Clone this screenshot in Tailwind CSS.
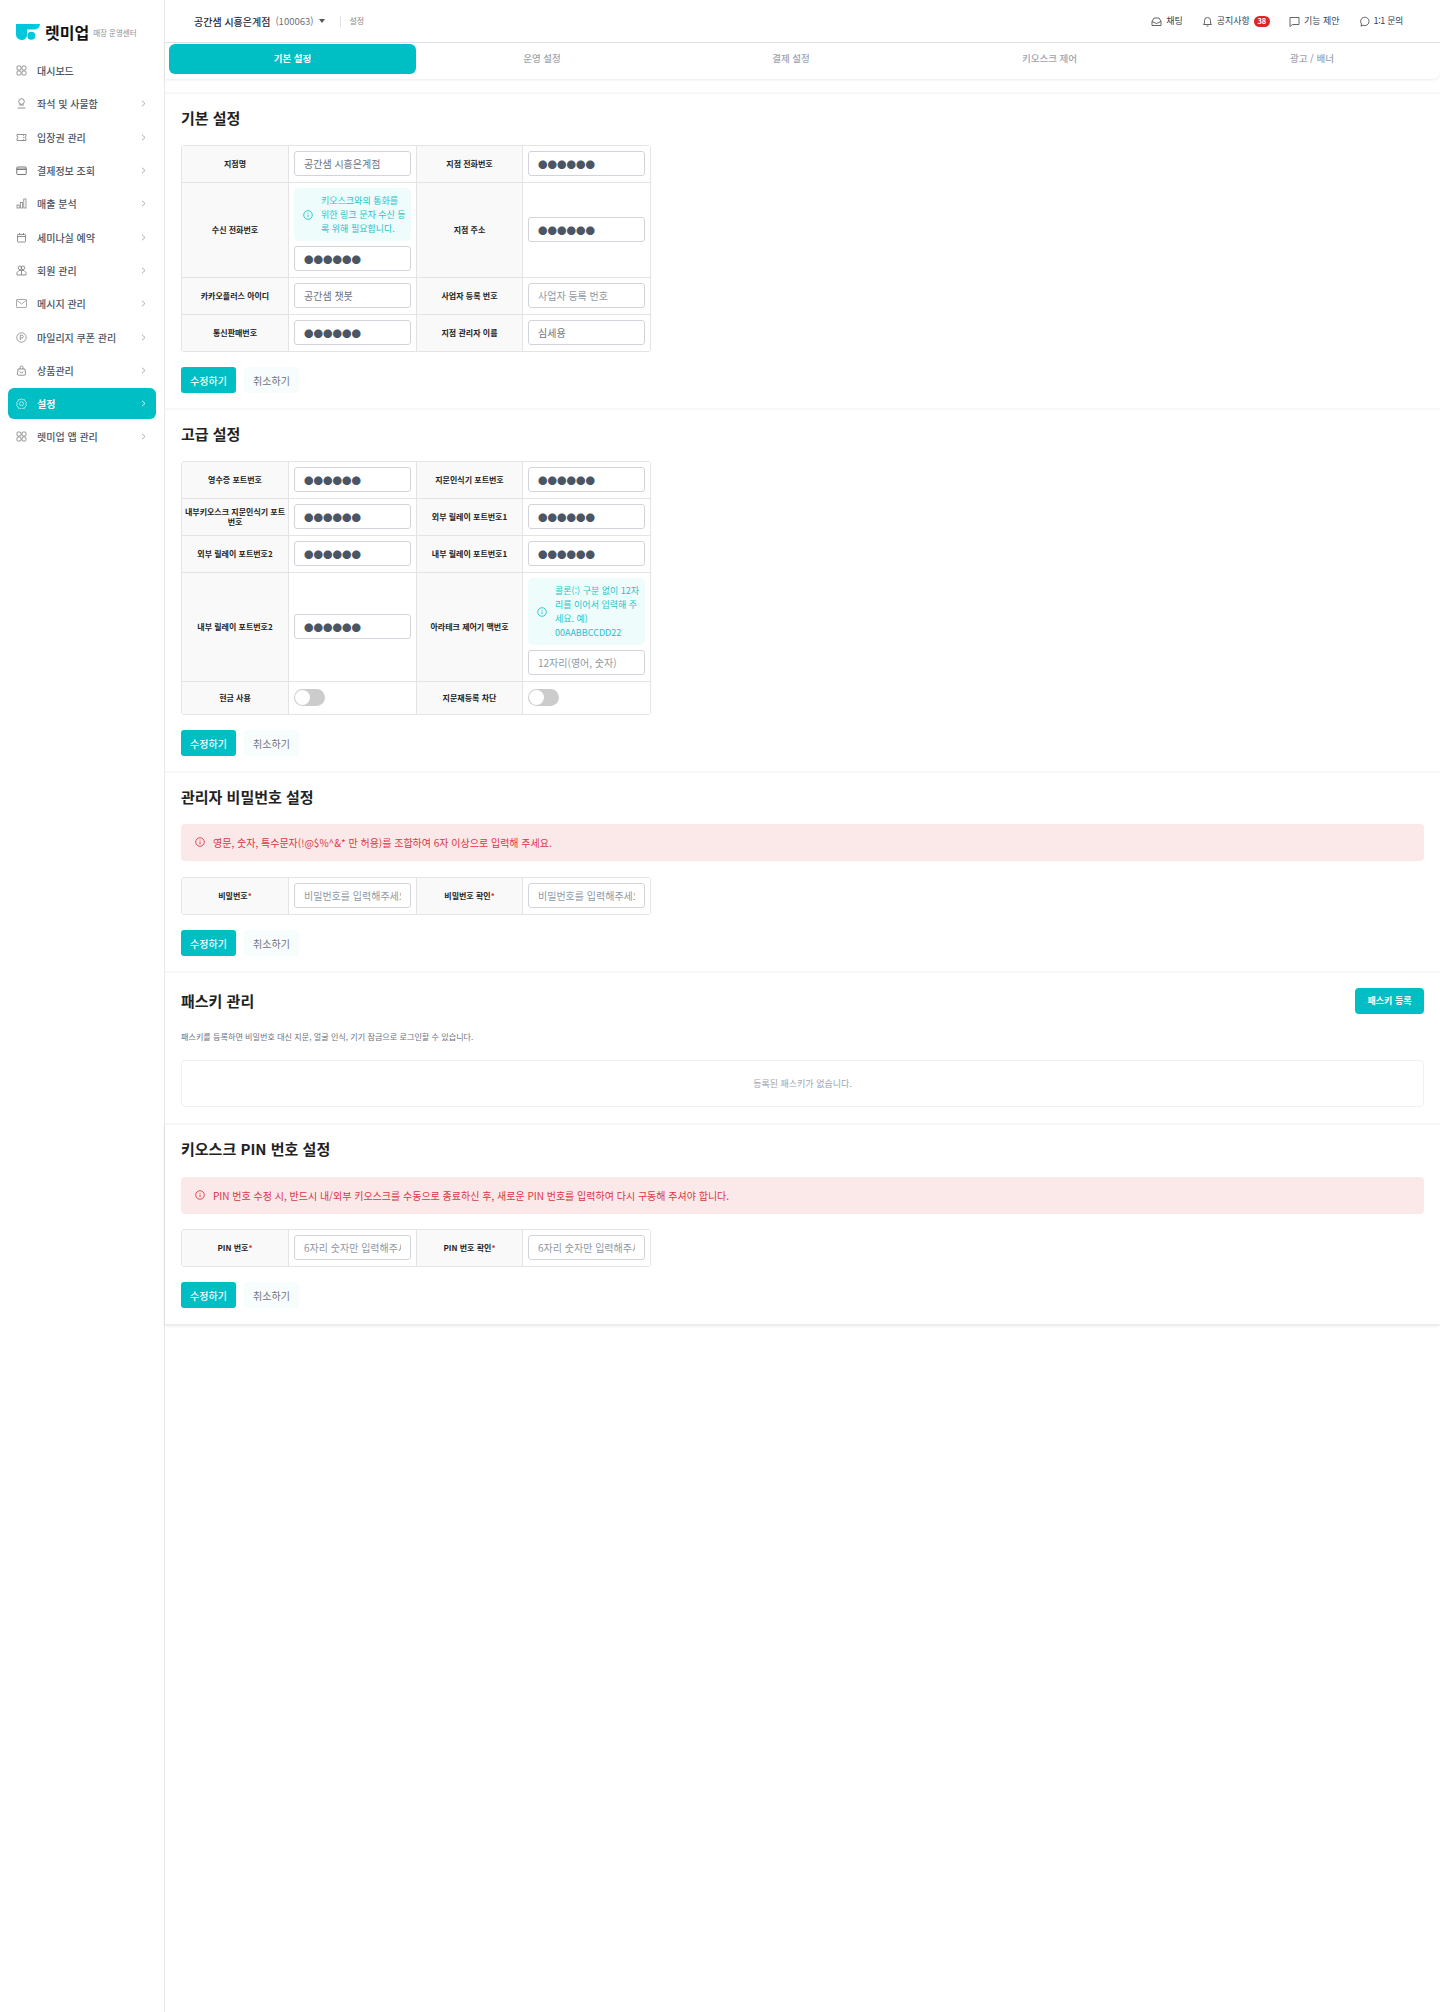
<!DOCTYPE html>
<html lang="ko">
<head>
  <meta charset="UTF-8" />
  <meta name="viewport" content="width=device-width, initial-scale=1.0" />
  <title>설정</title>
  <script src="https://cdn.jsdelivr.net/npm/@tailwindcss/browser@4"></script>
</head>
<body class="bg-white font-['Noto_Sans_CJK_KR','Noto_Sans',sans-serif] text-[#222]">
<div class="flex min-h-[2012px] w-[1440px]">

  <!-- sidebar -->
  <aside class="w-[165px] shrink-0 border-r border-[#e8e8e8]">
    <div class="flex items-center h-[54px] pl-4 pt-[9px]">
      <svg class="w-[24px] h-[16px]" viewBox="0 0 24 16" fill="#00c8dc">
        <path d="M0 0h24a6 6 0 0 1-5.500 5.500H11V11a5 5 0 0 1-5.500 5A5.500 5.500 0 0 1 0 11z"/>
        <circle cx="15.300" cy="11.800" r="4"/>
      </svg>
      <span class="ml-[5px] text-[16px] leading-none font-bold text-[#111]">렛미업</span>
      <span class="ml-[4px] mt-[2px] text-[7.500px] text-[#8a8f98]">매장 운영센터</span>
    </div>
    <nav class="flex flex-col px-2 text-[10px] font-medium text-[#4b5563]">
      <a class="flex items-center h-[33.300px] pl-[8px]">
        <svg class="w-[11px] h-[11px] mr-[10px] text-[#777]" viewBox="0 0 11 11" fill="none" stroke="currentColor" stroke-width=".8"><rect x="1" y="1" width="4" height="4" rx="1.200"/><rect x="6" y="1" width="4" height="4" rx="1.200"/><rect x="1" y="6" width="4" height="4" rx="1.200"/><rect x="6" y="6" width="4" height="4" rx="1.200"/></svg>
        대시보드
      </a>
      <a class="flex items-center h-[33.300px] pl-[8px]">
        <svg class="w-[11px] h-[11px] mr-[10px] text-[#777]" viewBox="0 0 11 11" fill="none" stroke="currentColor" stroke-width=".8"><circle cx="5.500" cy="3.500" r="2.800"/><path d="M3 7h5M1.500 10h8"/></svg>
        좌석 및 사물함
        <span class="ml-auto mr-[10px] text-[#999]"><svg class="w-[5px] h-[7px]" viewBox="0 0 5 7" fill="none" stroke="currentColor" stroke-width=".8"><path d="M1 .8 4 3.500 1 6.200"/></svg></span>
      </a>
      <a class="flex items-center h-[33.300px] pl-[8px]">
        <svg class="w-[11px] h-[11px] mr-[10px] text-[#777]" viewBox="0 0 11 11" fill="none" stroke="currentColor" stroke-width=".8"><path d="M1 2.500h9v2a1 1 0 0 0 0 2v2H1v-2a1 1 0 0 0 0-2zM7.500 3v.8M7.500 5v1M7.500 7.200V8"/></svg>
        입장권 관리
        <span class="ml-auto mr-[10px] text-[#999]"><svg class="w-[5px] h-[7px]" viewBox="0 0 5 7" fill="none" stroke="currentColor" stroke-width=".8"><path d="M1 .8 4 3.500 1 6.200"/></svg></span>
      </a>
      <a class="flex items-center h-[33.300px] pl-[8px]">
        <svg class="w-[11px] h-[11px] mr-[10px] text-[#666]" viewBox="0 0 11 11" fill="none" stroke="currentColor" stroke-width=".9"><rect x=".8" y="2" width="9.400" height="7.500" rx=".8"/><path d="M.8 4.200h9.400" stroke-width="1.300"/></svg>
        결제정보 조회
        <span class="ml-auto mr-[10px] text-[#999]"><svg class="w-[5px] h-[7px]" viewBox="0 0 5 7" fill="none" stroke="currentColor" stroke-width=".8"><path d="M1 .8 4 3.500 1 6.200"/></svg></span>
      </a>
      <a class="flex items-center h-[33.300px] pl-[8px]">
        <svg class="w-[11px] h-[11px] mr-[10px] text-[#777]" viewBox="0 0 11 11" fill="none" stroke="currentColor" stroke-width=".7"><rect x="1" y="7" width="2.200" height="3"/><rect x="4.400" y="4.500" width="2.200" height="5.500"/><rect x="7.800" y="1" width="2.200" height="9"/></svg>
        매출 분석
        <span class="ml-auto mr-[10px] text-[#999]"><svg class="w-[5px] h-[7px]" viewBox="0 0 5 7" fill="none" stroke="currentColor" stroke-width=".8"><path d="M1 .8 4 3.500 1 6.200"/></svg></span>
      </a>
      <a class="flex items-center h-[33.300px] pl-[8px]">
        <svg class="w-[11px] h-[11px] mr-[10px] text-[#777]" viewBox="0 0 11 11" fill="none" stroke="currentColor" stroke-width=".8"><rect x="1.500" y="2.500" width="8" height="7.500" rx=".6"/><path d="M1.500 4.500h8M3.500 1v2M7.500 1v2"/></svg>
        세미나실 예약
        <span class="ml-auto mr-[10px] text-[#999]"><svg class="w-[5px] h-[7px]" viewBox="0 0 5 7" fill="none" stroke="currentColor" stroke-width=".8"><path d="M1 .8 4 3.500 1 6.200"/></svg></span>
      </a>
      <a class="flex items-center h-[33.300px] pl-[8px]">
        <svg class="w-[11px] h-[11px] mr-[10px] text-[#777]" viewBox="0 0 11 11" fill="none" stroke="currentColor" stroke-width=".8"><circle cx="4" cy="2.800" r="1.800"/><circle cx="7" cy="2.800" r="1.800"/><path d="M1 10V7.500l2-2h5l2 2V10zM5.500 6v4"/></svg>
        회원 관리
        <span class="ml-auto mr-[10px] text-[#999]"><svg class="w-[5px] h-[7px]" viewBox="0 0 5 7" fill="none" stroke="currentColor" stroke-width=".8"><path d="M1 .8 4 3.500 1 6.200"/></svg></span>
      </a>
      <a class="flex items-center h-[33.300px] pl-[8px]">
        <svg class="w-[11px] h-[11px] mr-[10px] text-[#888]" viewBox="0 0 11 11" fill="none" stroke="currentColor" stroke-width=".7"><rect x=".5" y="1.500" width="10" height="8" rx=".6"/><path d="m1 2.500 4.500 3.500L10 2.500"/></svg>
        메시지 관리
        <span class="ml-auto mr-[10px] text-[#999]"><svg class="w-[5px] h-[7px]" viewBox="0 0 5 7" fill="none" stroke="currentColor" stroke-width=".8"><path d="M1 .8 4 3.500 1 6.200"/></svg></span>
      </a>
      <a class="flex items-center h-[33.300px] pl-[8px]">
        <svg class="w-[11px] h-[11px] mr-[10px] text-[#777]" viewBox="0 0 11 11" fill="none" stroke="currentColor" stroke-width=".7"><circle cx="5.500" cy="5.500" r="4.700"/><path d="M4.300 8V3.200h1.600a1.300 1.300 0 0 1 0 2.800H4.300"/></svg>
        마일리지 쿠폰 관리
        <span class="ml-auto mr-[10px] text-[#999]"><svg class="w-[5px] h-[7px]" viewBox="0 0 5 7" fill="none" stroke="currentColor" stroke-width=".8"><path d="M1 .8 4 3.500 1 6.200"/></svg></span>
      </a>
      <a class="flex items-center h-[33.300px] pl-[8px]">
        <svg class="w-[11px] h-[11px] mr-[10px] text-[#777]" viewBox="0 0 11 11" fill="none" stroke="currentColor" stroke-width=".8"><path d="M2 4h7l.5 5a1.200 1.200 0 0 1-1.200 1.200H2.700A1.200 1.200 0 0 1 1.500 9zM4 4V2.500a1.500 1.500 0 0 1 3 0V4M3.800 6.500a1.800 1.800 0 0 0 3.400 0"/></svg>
        상품관리
        <span class="ml-auto mr-[10px] text-[#999]"><svg class="w-[5px] h-[7px]" viewBox="0 0 5 7" fill="none" stroke="currentColor" stroke-width=".8"><path d="M1 .8 4 3.500 1 6.200"/></svg></span>
      </a>
      <a class="flex items-center h-[31px] my-[1.150px] pl-[8px] bg-[#00bfc4] rounded-[6px] text-white font-bold">
        <svg class="w-[11px] h-[11px] mr-[10px] text-white/80" viewBox="0 0 11 11" fill="none" stroke="currentColor" stroke-width=".8"><path d="m5.500.8 1.400 1 1.700-.1.500 1.700 1.300 1.100-.6 1.500.6 1.500-1.300 1.100-.5 1.700-1.700-.1-1.400 1-1.400-1-1.700.1-.5-1.700L.6 7.500l.6-1.500-.6-1.500 1.300-1.100.5-1.700 1.700.1z"/><circle cx="5.500" cy="5.700" r="2"/></svg>
        설정
        <span class="ml-auto mr-[10px] text-white"><svg class="w-[5px] h-[7px]" viewBox="0 0 5 7" fill="none" stroke="currentColor" stroke-width=".8"><path d="M1 .8 4 3.500 1 6.200"/></svg></span>
      </a>
      <a class="flex items-center h-[33.300px] pl-[8px]">
        <svg class="w-[11px] h-[11px] mr-[10px] text-[#777]" viewBox="0 0 11 11" fill="none" stroke="currentColor" stroke-width=".8"><rect x="1" y="1" width="4" height="4" rx="1.200"/><rect x="6" y="1" width="4" height="4" rx="1.200"/><rect x="1" y="6" width="4" height="4" rx="1.200"/><rect x="6" y="6" width="4" height="4" rx="1.200"/></svg>
        렛미업 앱 관리
        <span class="ml-auto mr-[10px] text-[#999]"><svg class="w-[5px] h-[7px]" viewBox="0 0 5 7" fill="none" stroke="currentColor" stroke-width=".8"><path d="M1 .8 4 3.500 1 6.200"/></svg></span>
      </a>
    </nav>
  </aside>

  <main class="w-[1275px]">
    <!-- top bar -->
    <header class="flex items-center h-[43px] pl-[29px] pr-[37px] border-b border-[#dfe3ec]">
      <span class="text-[10px] font-medium text-[#1f2937]">공간샘 시흥은계점</span>
      <span class="ml-[5px] text-[9.500px] text-[#6b7280]">(100063)</span>
      <span class="ml-[6px] w-0 h-0 border-x-[3px] border-x-transparent border-t-[4px] border-t-[#555]"></span>
      <span class="ml-[15px] w-px h-[11px] bg-[#e2e2e2]"></span>
      <span class="ml-[8px] text-[8px] text-[#888]">설정</span>
      <div class="ml-auto flex items-center text-[9px] text-[#374151]">
        <span class="flex items-center gap-[4px]">
          <svg class="w-[11px] h-[11px] text-[#555]" viewBox="0 0 11 11" fill="none" stroke="currentColor" stroke-width=".9"><path d="M1 5.500 3 2h5l2 3.500V9.500H1zM1 5.500l4.500 2 4.500-2"/></svg>
          채팅
        </span>
        <span class="flex items-center gap-[4px] ml-[19px]">
          <svg class="w-[11px] h-[11px] text-[#555]" viewBox="0 0 11 11" fill="none" stroke="currentColor" stroke-width=".9"><path d="M1.500 8.500h8L8.500 7V4.500a3 3 0 0 0-6 0V7zM4.500 10h2"/></svg>
          공지사항
          <span class="flex items-center justify-center w-[16px] h-[11px] rounded-full bg-[#dc2626] text-[7.500px] font-bold text-white">38</span>
        </span>
        <span class="flex items-center gap-[4px] ml-[19px]">
          <svg class="w-[11px] h-[11px] text-[#555]" viewBox="0 0 11 11" fill="none" stroke="currentColor" stroke-width=".9"><path d="M1 1.500h9v7H3.500L1 10.500z"/></svg>
          기능 제안
        </span>
        <span class="flex items-center gap-[4px] ml-[19px] tracking-[-0.35px]">
          <svg class="w-[11px] h-[11px] text-[#555]" viewBox="0 0 11 11" fill="none" stroke="currentColor" stroke-width=".9"><path d="M2 10.200 2.500 8A4.200 4.200 0 1 1 4 9.200z"/></svg>
          1:1 문의
        </span>
      </div>
    </header>

    <!-- tabs -->
    <div class="grid grid-cols-[248px_250px_248px_269px_256px] h-[36px] pl-[4px] pt-px rounded-br-[8px] shadow-[0_1px_3px_rgba(0,0,0,0.08)] text-[9.500px] font-medium text-[#9ca3af]">
      <a class="flex items-center justify-center w-[247px] h-[30px] pb-px rounded-[6px] bg-[#00bfc4] text-white font-bold">기본 설정</a>
      <a class="flex items-center justify-center h-[30px] pb-px">운영 설정</a>
      <a class="flex items-center justify-center h-[30px] pb-px">결제 설정</a>
      <a class="flex items-center justify-center h-[30px] pb-px">키오스크 제어</a>
      <a class="flex items-center justify-center h-[30px] pb-px">광고 / 배너</a>
    </div>
    <div class="h-[13px]"></div>

    <!-- 기본 설정 -->
    <section class="border-t-[2px] border-[#f7f7f7] px-4 pt-[13px] pb-[15px]">
      <h2 class="text-[15px] leading-[22px] font-bold text-[#222] mb-[16px]">기본 설정</h2>
      <div class="grid grid-cols-[106px_127px_105px_127px] grid-rows-[36px_94px_36px_36px] gap-px w-[470px] bg-[#e4e4e4] border border-[#e4e4e4] rounded-[3px] text-[8px] font-bold">
        <div class="flex items-center justify-center bg-[#f9f9f9]">지점명</div>
        <div class="flex items-center px-[5px] pb-px bg-white"><input type="text" value="공간샘 시흥은계점" class="w-full h-[25px] px-[9px] text-[10px] font-normal text-[#6b7280] border border-[#d1d5db] rounded-[3px]" /></div>
        <div class="flex items-center justify-center bg-[#f9f9f9]">지점 전화번호</div>
        <div class="flex items-center px-[5px] pb-px bg-white"><input type="text" value="●●●●●●" class="w-full h-[25px] px-[9px] text-[9.500px] font-normal text-[#4b5563] border border-[#d1d5db] rounded-[3px]" /></div>

        <div class="flex items-center justify-center bg-[#f9f9f9]">수신 전화번호</div>
        <div class="flex flex-col justify-center gap-[5px] px-[5px] pb-px bg-white">
          <div class="flex items-center gap-[8px] h-[53px] pl-[9px] pr-[5px] rounded-[5px] bg-[#effcfc] text-[9px] leading-[14px] font-normal text-[#1cc4c9]">
            <svg class="w-[10px] h-[10px] shrink-0" viewBox="0 0 11 11" fill="none" stroke="currentColor"><circle cx="5.500" cy="5.500" r="4.700"/><path d="M5.500 5v3M5.500 3v1"/></svg>
            <p>키오스크와의 통화를 위한 링크 문자 수신 등록 위해 필요합니다.</p>
          </div>
          <input type="text" value="●●●●●●" class="w-full h-[25px] px-[9px] text-[9.500px] font-normal text-[#4b5563] border border-[#d1d5db] rounded-[3px]" />
        </div>
        <div class="flex items-center justify-center bg-[#f9f9f9]">지점 주소</div>
        <div class="flex items-center px-[5px] pb-px bg-white"><input type="text" value="●●●●●●" class="w-full h-[25px] px-[9px] text-[9.500px] font-normal text-[#4b5563] border border-[#d1d5db] rounded-[3px]" /></div>

        <div class="flex items-center justify-center bg-[#f9f9f9]">카카오플러스 아이디</div>
        <div class="flex items-center px-[5px] pb-px bg-white"><input type="text" value="공간샘 챗봇" class="w-full h-[25px] px-[9px] text-[10px] font-normal text-[#6b7280] border border-[#d1d5db] rounded-[3px]" /></div>
        <div class="flex items-center justify-center bg-[#f9f9f9]">사업자 등록 번호</div>
        <div class="flex items-center px-[5px] pb-px bg-white"><input type="text" placeholder="사업자 등록 번호" class="w-full h-[25px] px-[9px] text-[10px] font-normal placeholder:text-[#9099a5] border border-[#d1d5db] rounded-[3px]" /></div>

        <div class="flex items-center justify-center bg-[#f9f9f9]">통신판매번호</div>
        <div class="flex items-center px-[5px] pb-px bg-white"><input type="text" value="●●●●●●" class="w-full h-[25px] px-[9px] text-[9.500px] font-normal text-[#4b5563] border border-[#d1d5db] rounded-[3px]" /></div>
        <div class="flex items-center justify-center bg-[#f9f9f9]">지점 관리자 이름</div>
        <div class="flex items-center px-[5px] pb-px bg-white"><input type="text" value="심세용" class="w-full h-[25px] px-[9px] text-[10px] font-normal text-[#6b7280] border border-[#d1d5db] rounded-[3px]" /></div>
      </div>
      <div class="flex gap-[8px] mt-[15px] text-[10px]">
        <button class="w-[55px] h-[26px] rounded-[3px] bg-[#00bfc4] text-white font-medium">수정하기</button>
        <button class="w-[55px] h-[26px] rounded-[3px] bg-[#f7fdfd] text-[#6b7280]">취소하기</button>
      </div>
    </section>

    <!-- 고급 설정 -->
    <section class="border-t-[2px] border-[#f7f7f7] px-4 pt-[13px] pb-[15px]">
      <h2 class="text-[15px] leading-[22px] font-bold text-[#222] mb-[16px]">고급 설정</h2>
      <div class="grid grid-cols-[106px_127px_105px_127px] grid-rows-[36px_36px_36px_108px_32px] gap-px w-[470px] bg-[#e4e4e4] border border-[#e4e4e4] rounded-[3px] text-[8px] font-bold">
        <div class="flex items-center justify-center bg-[#f9f9f9]">영수증 포트번호</div>
        <div class="flex items-center px-[5px] pb-px bg-white"><input type="text" value="●●●●●●" class="w-full h-[25px] px-[9px] text-[9.500px] font-normal text-[#4b5563] border border-[#d1d5db] rounded-[3px]" /></div>
        <div class="flex items-center justify-center bg-[#f9f9f9]">지문인식기 포트번호</div>
        <div class="flex items-center px-[5px] pb-px bg-white"><input type="text" value="●●●●●●" class="w-full h-[25px] px-[9px] text-[9.500px] font-normal text-[#4b5563] border border-[#d1d5db] rounded-[3px]" /></div>

        <div class="flex items-center justify-center text-center leading-[10px] px-[2px] bg-[#f9f9f9]">내부키오스크 지문인식기 포트번호</div>
        <div class="flex items-center px-[5px] pb-px bg-white"><input type="text" value="●●●●●●" class="w-full h-[25px] px-[9px] text-[9.500px] font-normal text-[#4b5563] border border-[#d1d5db] rounded-[3px]" /></div>
        <div class="flex items-center justify-center bg-[#f9f9f9]">외부 릴레이 포트번호1</div>
        <div class="flex items-center px-[5px] pb-px bg-white"><input type="text" value="●●●●●●" class="w-full h-[25px] px-[9px] text-[9.500px] font-normal text-[#4b5563] border border-[#d1d5db] rounded-[3px]" /></div>

        <div class="flex items-center justify-center bg-[#f9f9f9]">외부 릴레이 포트번호2</div>
        <div class="flex items-center px-[5px] pb-px bg-white"><input type="text" value="●●●●●●" class="w-full h-[25px] px-[9px] text-[9.500px] font-normal text-[#4b5563] border border-[#d1d5db] rounded-[3px]" /></div>
        <div class="flex items-center justify-center bg-[#f9f9f9]">내부 릴레이 포트번호1</div>
        <div class="flex items-center px-[5px] pb-px bg-white"><input type="text" value="●●●●●●" class="w-full h-[25px] px-[9px] text-[9.500px] font-normal text-[#4b5563] border border-[#d1d5db] rounded-[3px]" /></div>

        <div class="flex items-center justify-center bg-[#f9f9f9]">내부 릴레이 포트번호2</div>
        <div class="flex items-center px-[5px] pb-px bg-white"><input type="text" value="●●●●●●" class="w-full h-[25px] px-[9px] text-[9.500px] font-normal text-[#4b5563] border border-[#d1d5db] rounded-[3px]" /></div>
        <div class="flex items-center justify-center bg-[#f9f9f9]">아라테크 제어기 맥번호</div>
        <div class="flex flex-col justify-center gap-[5px] px-[5px] pb-px bg-white">
          <div class="flex items-center gap-[8px] h-[67px] pl-[9px] pr-[5px] rounded-[5px] bg-[#effcfc] text-[9px] leading-[14px] font-normal text-[#1cc4c9]">
            <svg class="w-[10px] h-[10px] shrink-0" viewBox="0 0 11 11" fill="none" stroke="currentColor"><circle cx="5.500" cy="5.500" r="4.700"/><path d="M5.500 5v3M5.500 3v1"/></svg>
            <p>콜론(:) 구분 없이 12자리를 이어서 입력해 주세요. 예) 00AABBCCDD22</p>
          </div>
          <input type="text" placeholder="12자리(영어, 숫자)" class="w-full h-[25px] px-[9px] text-[10px] font-normal placeholder:text-[#9099a5] border border-[#d1d5db] rounded-[3px]" />
        </div>

        <div class="flex items-center justify-center bg-[#f9f9f9]">현금 사용</div>
        <div class="flex items-center px-[5px] pb-px bg-white">
          <span class="flex items-center w-[31px] h-[17px] rounded-full bg-[#cccccc]"><span class="w-[15px] h-[15px] ml-px rounded-full bg-white"></span></span>
        </div>
        <div class="flex items-center justify-center bg-[#f9f9f9]">지문재등록 차단</div>
        <div class="flex items-center px-[5px] pb-px bg-white">
          <span class="flex items-center w-[31px] h-[17px] rounded-full bg-[#cccccc]"><span class="w-[15px] h-[15px] ml-px rounded-full bg-white"></span></span>
        </div>
      </div>
      <div class="flex gap-[8px] mt-[15px] text-[10px]">
        <button class="w-[55px] h-[26px] rounded-[3px] bg-[#00bfc4] text-white font-medium">수정하기</button>
        <button class="w-[55px] h-[26px] rounded-[3px] bg-[#f7fdfd] text-[#6b7280]">취소하기</button>
      </div>
    </section>

    <!-- 관리자 비밀번호 설정 -->
    <section class="border-t-[2px] border-[#f7f7f7] px-4 pt-[13px] pb-[15px]">
      <h2 class="text-[15px] leading-[22px] font-bold text-[#222] mb-[16px]">관리자 비밀번호 설정</h2>
      <div class="flex items-center h-[37px] px-[14px] pb-px rounded-[4px] bg-[#fbe9e9] text-[10px] text-[#dc3545]">
        <svg class="w-[10px] h-[10px] mr-[8px]" viewBox="0 0 11 11" fill="none" stroke="currentColor"><circle cx="5.500" cy="5.500" r="4.700"/><path d="M5.500 5v3M5.500 3v1"/></svg>
        영문, 숫자, 특수문자(!@$%^&amp;* 만 허용)를 조합하여 6자 이상으로 입력해 주세요.
      </div>
      <div class="grid grid-cols-[106px_127px_105px_127px] auto-rows-[36px] gap-px w-[470px] mt-[16px] bg-[#e4e4e4] border border-[#e4e4e4] rounded-[3px] text-[8px] font-bold">
        <div class="flex items-center justify-center bg-[#f9f9f9]">비밀번호<span class="text-[#dc2626]">*</span></div>
        <div class="flex items-center px-[5px] pb-px bg-white"><input type="password" placeholder="비밀번호를 입력해주세요" class="w-full h-[25px] px-[9px] text-[10px] font-normal placeholder:text-[#9099a5] border border-[#d1d5db] rounded-[3px]" /></div>
        <div class="flex items-center justify-center bg-[#f9f9f9]">비밀번호 확인<span class="text-[#dc2626]">*</span></div>
        <div class="flex items-center px-[5px] pb-px bg-white"><input type="password" placeholder="비밀번호를 입력해주세요" class="w-full h-[25px] px-[9px] text-[10px] font-normal placeholder:text-[#9099a5] border border-[#d1d5db] rounded-[3px]" /></div>
      </div>
      <div class="flex gap-[8px] mt-[15px] text-[10px]">
        <button class="w-[55px] h-[26px] rounded-[3px] bg-[#00bfc4] text-white font-medium">수정하기</button>
        <button class="w-[55px] h-[26px] rounded-[3px] bg-[#f7fdfd] text-[#6b7280]">취소하기</button>
      </div>
    </section>

    <!-- 패스키 관리 -->
    <section class="border-t-[2px] border-[#f7f7f7] px-4 pt-[15px] pb-[16px]">
      <div class="flex items-center justify-between h-[26px]">
        <h2 class="text-[15px] leading-[22px] font-bold text-[#222]">패스키 관리</h2>
        <button class="w-[69px] h-[26px] rounded-[4px] bg-[#00bfc4] text-[9px] font-bold text-white">패스키 등록</button>
      </div>
      <p class="mt-[16px] text-[8.100px] leading-[14px] text-[#6b7280]">패스키를 등록하면 비밀번호 대신 지문, 얼굴 인식, 기기 잠금으로 로그인할 수 있습니다.</p>
      <div class="flex items-center justify-center h-[47px] mt-[16px] border border-[#f0f0f0] rounded-[4px] text-[9px] text-[#9ca3af]">등록된 패스키가 없습니다.</div>
    </section>

    <!-- 키오스크 PIN 번호 설정 -->
    <section class="border-t-[2px] border-[#f7f7f7] px-4 pt-[13px] pb-[16px] shadow-[0_2px_3px_rgba(0,0,0,0.1)]">
      <h2 class="text-[15px] leading-[22px] font-bold text-[#222] mb-[17px]">키오스크 PIN 번호 설정</h2>
      <div class="flex items-center h-[37px] px-[14px] pb-px rounded-[4px] bg-[#fbe9e9] text-[10px] text-[#dc3545]">
        <svg class="w-[10px] h-[10px] mr-[8px]" viewBox="0 0 11 11" fill="none" stroke="currentColor"><circle cx="5.500" cy="5.500" r="4.700"/><path d="M5.500 5v3M5.500 3v1"/></svg>
        PIN 번호 수정 시, 반드시 내/외부 키오스크를 수동으로 종료하신 후, 새로운 PIN 번호를 입력하여 다시 구동해 주셔야 합니다.
      </div>
      <div class="grid grid-cols-[106px_127px_105px_127px] auto-rows-[36px] gap-px w-[470px] mt-[15px] bg-[#e4e4e4] border border-[#e4e4e4] rounded-[3px] text-[8px] font-bold">
        <div class="flex items-center justify-center bg-[#f9f9f9]">PIN 번호<span class="text-[#dc2626]">*</span></div>
        <div class="flex items-center px-[5px] pb-px bg-white"><input type="password" placeholder="6자리 숫자만 입력해주세요" class="w-full h-[25px] px-[9px] text-[10px] font-normal placeholder:text-[#9099a5] border border-[#d1d5db] rounded-[3px]" /></div>
        <div class="flex items-center justify-center bg-[#f9f9f9]">PIN 번호 확인<span class="text-[#dc2626]">*</span></div>
        <div class="flex items-center px-[5px] pb-px bg-white"><input type="password" placeholder="6자리 숫자만 입력해주세요" class="w-full h-[25px] px-[9px] text-[10px] font-normal placeholder:text-[#9099a5] border border-[#d1d5db] rounded-[3px]" /></div>
      </div>
      <div class="flex gap-[8px] mt-[15px] text-[10px]">
        <button class="w-[55px] h-[26px] rounded-[3px] bg-[#00bfc4] text-white font-medium">수정하기</button>
        <button class="w-[55px] h-[26px] rounded-[3px] bg-[#f7fdfd] text-[#6b7280]">취소하기</button>
      </div>
    </section>
  </main>
</div>
</body>
</html>
